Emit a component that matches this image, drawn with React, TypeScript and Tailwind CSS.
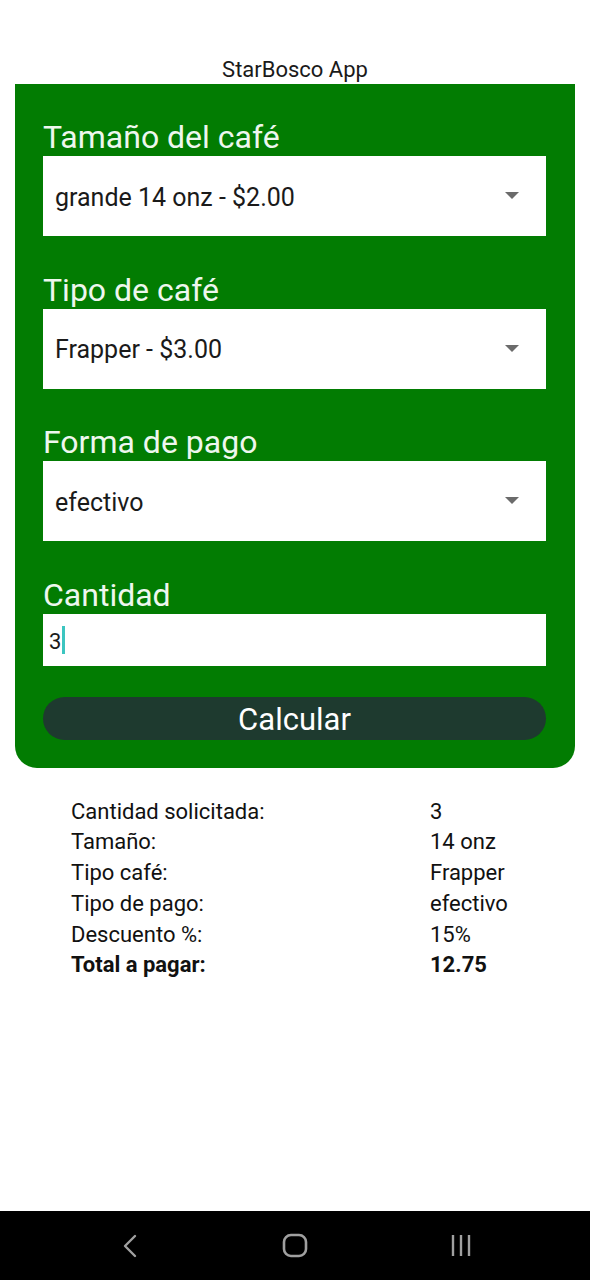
const fields = [
  { label: "Tamaño del café", value: "grande 14 onz - $2.00" },
  { label: "Tipo de café", value: "Frapper - $3.00" },
  { label: "Forma de pago", value: "efectivo" },
];

const results = [
  { label: "Cantidad solicitada:", value: "3" },
  { label: "Tamaño:", value: "14 onz" },
  { label: "Tipo café:", value: "Frapper" },
  { label: "Tipo de pago:", value: "efectivo" },
  { label: "Descuento %:", value: "15%" },
];

function Arrow() {
  return (
    <svg width="14" height="8" viewBox="0 0 14 8" className="shrink-0">
      <polygon points="0,0 14,0 7,7" fill="#6b6b6b" />
    </svg>
  );
}

export default function App() {
  return (
    <div
      className="relative w-[590px] h-[1280px] bg-white overflow-hidden"
      style={{ fontFamily: "Roboto, 'Noto Sans', sans-serif" }}
    >
      {/* Header */}
      <div className="pt-[55px] h-[84px] text-center text-[22px] leading-[30px] text-[#1a1a1a]">
        StarBosco App
      </div>

      {/* Form panel */}
      <div className="mx-[15px] bg-[#027c02] rounded-b-[22px] pt-[34px] pb-[28px] pl-[28px] pr-[29px]">
        {fields.map((f) => (
          <div key={f.label} className="mb-[34.5px]">
            <div className="h-[34px] leading-[38px] text-[32px] text-[#eef7ee]">{f.label}</div>
            <div className="mt-[4px] h-[80px] bg-white flex items-center justify-between pl-[12px] pr-[27px]">
              <span className="pt-[3px] text-[25px] text-[#1a1a1a]">{f.value}</span>
              <Arrow />
            </div>
          </div>
        ))}

        <div className="h-[34px] leading-[38px] text-[32px] text-[#eef7ee]">Cantidad</div>
        <div className="mt-[4px] h-[52px] bg-white flex items-center pl-[6px]">
          <span className="pt-[4px] text-[22px] text-[#1a1a1a]">3</span>
          <span className="ml-[1px] w-[3px] h-[28px] bg-[#3cc5c0]" />
        </div>

        <button className="mt-[31px] w-full h-[43px] rounded-full bg-[#1e3a2f] text-white text-[31px] leading-[46px]">
          Calcular
        </button>
      </div>

      {/* Results */}
      <div className="mt-[29px] pl-[71px] text-[22px] text-[#111]">
        {results.map((r) => (
          <div key={r.label} className="flex h-[30.8px] leading-[30.8px]">
            <span className="w-[359px]">{r.label}</span>
            <span>{r.value}</span>
          </div>
        ))}
        <div className="flex h-[30.8px] leading-[30.8px] font-bold">
          <span className="w-[359px]">Total a pagar:</span>
          <span>12.75</span>
        </div>
      </div>

      {/* Android nav bar */}
      <div className="absolute bottom-0 left-0 w-full h-[69px] bg-black flex items-center pl-[123px]">
        <svg width="14" height="24" viewBox="0 0 14 24">
          <polyline points="12,2 2,12 12,22" fill="none" stroke="#a0a0a0" strokeWidth="2.4" strokeLinecap="round" strokeLinejoin="round" />
        </svg>
        <svg width="26" height="25" viewBox="0 0 26 25" className="ml-[145px]">
          <rect x="2" y="2" width="22" height="21" rx="7" fill="none" stroke="#a0a0a0" strokeWidth="2.6" />
        </svg>
        <svg width="22" height="23" viewBox="0 0 22 23" className="ml-[142px]">
          <line x1="3" y1="1" x2="3" y2="22" stroke="#a0a0a0" strokeWidth="2.4" />
          <line x1="11" y1="1" x2="11" y2="22" stroke="#a0a0a0" strokeWidth="2.4" />
          <line x1="19" y1="1" x2="19" y2="22" stroke="#a0a0a0" strokeWidth="2.4" />
        </svg>
      </div>
    </div>
  );
}
